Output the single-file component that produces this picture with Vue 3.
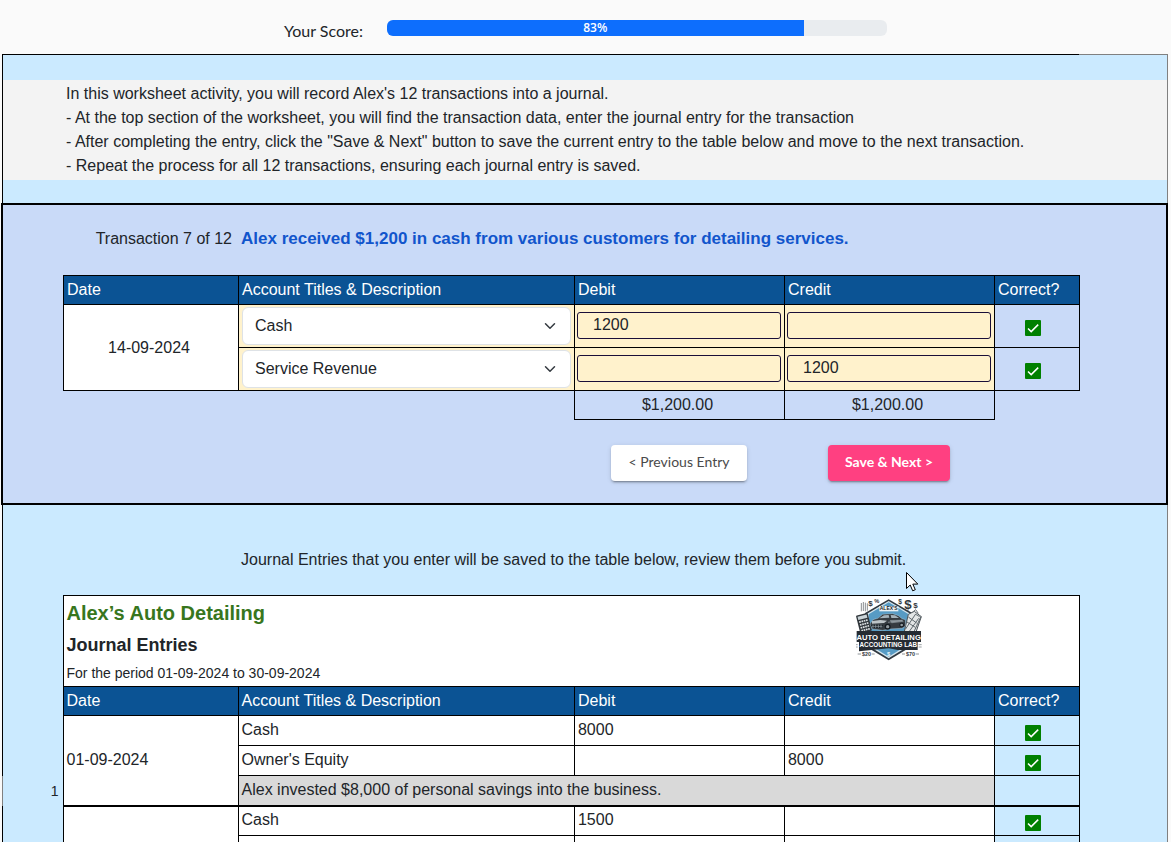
<script setup>
import { ref } from 'vue'

const score = (10 / 12) * 100
const scoreText = Math.floor(score)
const accounts = ['Cash', 'Service Revenue', "Owner's Equity", 'Supplies', 'Accounts Payable']
const lines = ref([
  { account: 'Cash', debit: '1200', credit: '' },
  { account: 'Service Revenue', debit: '', credit: '1200' },
])
const journal = [
  {
    no: 1,
    date: '01-09-2024',
    rows: [
      { account: 'Cash', debit: '8000', credit: '' },
      { account: "Owner's Equity", debit: '', credit: '8000' },
    ],
    note: 'Alex invested $8,000 of personal savings into the business.',
  },
  {
    no: 2,
    date: '',
    rows: [
      { account: 'Cash', debit: '1500', credit: '' },
      { account: '', debit: '', credit: '' },
    ],
    note: '',
  },
]
</script>

<template>
  <div class="page">
    <header class="score">
      <span id="score-label" class="score-label">Your Score:</span>
      <div class="track" role="progressbar" aria-labelledby="score-label" :aria-valuenow="scoreText" aria-valuemin="0" aria-valuemax="100">
        <div class="fill" :style="{ width: score + '%' }">{{ scoreText }}%</div>
      </div>
    </header>

    <main class="sheet">
      <section class="intro">
        <div class="intro-text">
          <p>In this worksheet activity, you will record Alex's 12 transactions into a journal.</p>
          <p>- At the top section of the worksheet, you will find the transaction data, enter the journal entry for the transaction</p>
          <p>- After completing the entry, click the "Save &amp; Next" button to save the current entry to the table below and move to the next transaction.</p>
          <p>- Repeat the process for all 12 transactions, ensuring each journal entry is saved.</p>
        </div>
      </section>

      <section class="panel">
        <div class="prompt">
          <span class="counter">Transaction 7 of 12</span>
          <strong class="event">Alex received $1,200 in cash from various customers for detailing services.</strong>
        </div>
        <table class="grid entry">
          <colgroup>
            <col class="c-date" /><col /><col class="c-amount" /><col class="c-amount" /><col class="c-ok" />
          </colgroup>
          <thead>
            <tr>
              <th scope="col">Date</th>
              <th scope="col">Account Titles &amp; Description</th>
              <th scope="col">Debit</th>
              <th scope="col">Credit</th>
              <th scope="col">Correct?</th>
            </tr>
          </thead>
          <tbody>
            <tr v-for="(line, i) in lines" :key="i" class="line">
              <td v-if="i === 0" rowspan="2" class="white center">14-09-2024</td>
              <td class="cream pick-cell">
                <div class="pick">
                  <select v-model="line.account" :aria-label="'Account, line ' + (i + 1)">
                    <option v-for="a in accounts" :key="a">{{ a }}</option>
                  </select>
                  <svg class="chevron" viewBox="0 0 16 16" aria-hidden="true"><path d="m2 5 6 6 6-6" /></svg>
                </div>
              </td>
              <td class="cream amount-cell"><input v-model="line.debit" type="text" :aria-label="'Debit, line ' + (i + 1)" /></td>
              <td class="cream amount-cell"><input v-model="line.credit" type="text" :aria-label="'Credit, line ' + (i + 1)" /></td>
              <td class="ok">
                <svg class="tick" viewBox="0 0 16 16" role="img" aria-label="Correct"><rect width="16" height="16" rx="1" /><path d="M3 8.5 6.2 11.6 13.2 4.6" /></svg>
              </td>
            </tr>
            <tr class="totals">
              <td colspan="2" class="blank"></td>
              <td class="center">$1,200.00</td>
              <td class="center">$1,200.00</td>
              <td class="blank"></td>
            </tr>
          </tbody>
        </table>
        <div class="actions">
          <div class="slot"><button type="button" class="btn">&lt; Previous Entry</button></div>
          <div class="slot"><button type="button" class="btn primary">Save &amp; Next &gt;</button></div>
        </div>
      </section>

      <p class="hint">Journal Entries that you enter will be saved to the table below, review them before you submit.</p>

      <table class="grid journal">
        <colgroup>
          <col class="c-no" /><col class="c-date" /><col /><col class="c-amount" /><col class="c-amount" /><col class="c-ok" />
        </colgroup>
        <thead>
          <tr class="title-row">
            <td class="gutter"></td>
            <td colspan="5" class="white title-cell">
              <div class="title-box">
                <div>
                  <h1>Alex’s Auto Detailing</h1>
                  <h2>Journal Entries</h2>
                  <p class="period">For the period 01-09-2024 to 30-09-2024</p>
                </div>
                <svg class="logo" viewBox="33 102 198 189" role="img" aria-label="Alex's Auto Detailing Accounting Lab">
                  <!-- badge -->
                  <path d="M131 106 202 147 202 246 131 289 60 246 60 147Z" fill="#303941" />
                  <path d="M131 111 196 149 196 243 131 283 66 243 66 149Z" fill="#d5e6ef" />
                  <path d="M131 115 191 151 191 241 131 278 71 241 71 151Z" fill="#579bc4" />
                  <!-- money marks -->
                  <g fill="#30373c" font-family="Liberation Sans, sans-serif" font-weight="700">
                    <text x="70" y="127" font-size="24">$</text>
                    <text x="88" y="118" font-size="17">%</text>
                    <text x="160" y="119" font-size="20">$</text>
                    <text x="178" y="134" font-size="40">$</text>
                    <text x="205" y="132" font-size="24">$</text>
                  </g>
                  <path d="M49 117v25M55 114v27M61 116v26M67 118v22" stroke="#8b8f91" stroke-width="3" />
                  <!-- calculator -->
                  <g transform="rotate(-14 56 174)">
                    <rect x="38" y="150" width="36" height="55" rx="3" fill="#30363b" />
                    <rect x="42" y="154" width="28" height="10" fill="#c9d3d7" />
                    <path d="M43 171h27M43 180h27M43 189h27M43 198h27" stroke="#dfe3e4" stroke-width="5" stroke-dasharray="5 2" />
                  </g>
                  <!-- ledger and pens -->
                  <path d="M190 151 208 142 229 158 213 204 178 202Z" fill="#e3e6e6" stroke="#4c5459" stroke-width="3" />
                  <path d="M181 196 212 150M193 202 221 163M207 203 228 157M190 159 215 177M186 174 211 190" stroke="#5f686d" stroke-width="3" />
                  <path d="M202 145 212 137 220 148M212 151 224 158" fill="none" stroke="#697277" stroke-width="3" />
                  <!-- name ribbon -->
                  <rect x="103" y="126" width="57" height="16" fill="#edf3f5" />
                  <text x="131" y="139" text-anchor="middle" font-family="Liberation Sans, sans-serif" font-size="15" font-weight="700" fill="#20272c">ALEX'S</text>
                  <!-- car -->
                  <path d="M75 180 84 167 99 163 113 151 143 149 160 155 171 164 181 167 182 186 171 193 132 195 113 199 82 195Z" fill="#353b40" stroke="#dbe6ec" stroke-width="1" />
                  <path d="M103 163 117 154 131 153 133 161ZM137 153 150 154 162 162 139 162Z" fill="#a5b3bb" />
                  <path d="M81 171 106 168 126 170 117 177 81 179Z" fill="#bdc4c7" />
                  <path d="M134 168 172 167 176 173 140 178Z" fill="#7b858b" />
                  <path d="M78 183H114L111 191H82Z" fill="#111a20" />
                  <path d="M80 187H112M129 175 172 169M84 182v10M92 182v10M100 182v10M108 182v10" stroke="#9fa8ad" stroke-width="2" />
                  <circle cx="128" cy="188" r="9" fill="#151b20" /><circle cx="128" cy="188" r="5" fill="#929a9e" />
                  <circle cx="170" cy="183" r="7" fill="#151b20" /><circle cx="170" cy="183" r="4" fill="#929a9e" />
                  <!-- title banners -->
                  <path d="M35 201H228V234H218V258H159L131 253 102 256 42 262V234H35Z" fill="#252b32" />
                  <g fill="#fff" text-anchor="middle" font-weight="700" font-family="Liberation Sans Narrow, Liberation Sans, sans-serif">
                    <text x="131" y="227" font-size="23">AUTO DETAILING</text>
                    <text x="130" y="250" font-size="19">ACCOUNTING LAB</text>
                  </g>
                  <path d="M38 242h-5M38 249h-5M221 242h9M221 249h9" stroke="#666f74" stroke-width="2" />
                  <text x="131" y="275" text-anchor="middle" font-family="Liberation Sans, sans-serif" font-size="17" font-weight="700" fill="#eef6fa">$</text>
                  <path d="M38 270h10M80 270h9M171 270h9M212 270h10" stroke="#545d63" stroke-width="2" />
                  <g fill="#333b40" font-family="Liberation Sans, sans-serif" font-size="16" font-weight="700">
                    <text x="51" y="276">$20</text>
                    <text x="183" y="276">$70</text>
                  </g>
                </svg>
              </div>
            </td>
          </tr>
          <tr>
            <td class="gutter"></td>
            <th scope="col">Date</th>
            <th scope="col">Account Titles &amp; Description</th>
            <th scope="col">Debit</th>
            <th scope="col">Credit</th>
            <th scope="col">Correct?</th>
          </tr>
        </thead>
        <tbody v-for="entry in journal" :key="entry.no">
          <tr v-for="(row, i) in entry.rows" :key="i" class="saved">
            <td class="gutter"></td>
            <td v-if="i === 0" :rowspan="entry.rows.length + (entry.note ? 1 : 0)" class="white">{{ entry.date }}</td>
            <td class="white value">{{ row.account }}</td>
            <td class="white value">{{ row.debit }}</td>
            <td class="white value">{{ row.credit }}</td>
            <td class="ok">
              <svg class="tick" viewBox="0 0 16 16" role="img" aria-label="Correct"><rect width="16" height="16" rx="1" /><path d="M3 8.5 6.2 11.6 13.2 4.6" /></svg>
            </td>
          </tr>
          <tr v-if="entry.note" class="saved">
            <td class="gutter number">{{ entry.no }}</td>
            <td colspan="3" class="note">{{ entry.note }}</td>
            <td></td>
          </tr>
        </tbody>
      </table>
    </main>

    <svg class="pointer" viewBox="0 0 13 20" aria-hidden="true">
      <path d="M.5.5v16l3.7-3.5 2.5 5.8 2.6-1.1-2.5-5.6h5Z" />
    </svg>
  </div>
</template>

<style>
html,
body {
  background: #fafafa;
}
</style>

<style scoped>
.page {
  height: 100vh;
  overflow: hidden;
  background: #fafafa;
  color: #212529;
  font: 16px/24px "Liberation Sans", Arial, sans-serif;
}
.page * {
  box-sizing: border-box;
}
p,
h1,
h2 {
  margin: 0;
}
.score {
  display: flex;
  justify-content: center;
  gap: 24px;
  height: 54px;
  padding-top: 20px;
  font-family: Lato, sans-serif;
  line-height: 22px;
}
.track {
  width: 500px;
  height: 16px;
  border-radius: 6px;
  background: #e9ecef;
  overflow: hidden;
}
.fill {
  height: 16px;
  background: #0d6efd;
  color: #fff;
  font: 600 12px/16px "Open Sans", sans-serif;
  text-align: center;
}
.sheet {
  margin: 0 3px 0 2px;
  border-left: 1px solid #000;
  border-right: 1px solid #808080;
  background: #cbeaff;
}
.intro {
  padding: 26px 0 23px;
  background: linear-gradient(to right, #000 calc(100% - 88px), #808080 0) top / 100% 1px no-repeat;
}
.intro-text {
  padding: 2px 63px;
  background: #f3f3f3;
}
.panel {
  margin: 0 -1px 0 -2px;
  padding: 22px 86px 22px 60px;
  border: 2px solid #000;
  background: #c9daf8;
}
.prompt {
  display: flex;
  align-items: baseline;
  gap: 9px;
  margin-bottom: 24px;
}
.counter {
  width: 169px;
  text-align: right;
}
.event {
  color: #1155cc;
  font-size: 17px;
}
.grid {
  width: 100%;
  table-layout: fixed;
  border-collapse: collapse;
}
.c-no {
  width: 60px;
}
.c-date {
  width: 175px;
}
.c-amount {
  width: 210px;
}
.c-ok {
  width: 85px;
}
.grid tr {
  height: 29px;
}
.grid th,
.grid td {
  padding: 0 3px;
  border: 1px solid #000;
  text-align: left;
  font-weight: 400;
}
.grid th {
  background: #0b5394;
  color: #fff;
}
.grid .line {
  height: 43px;
}
.grid .white {
  background: #fff;
}
.grid .cream {
  background: #fff2cc;
}
.grid .center {
  padding: 0 7px 0 3px;
  text-align: center;
}
.grid .blank {
  border: 0;
}
.pick {
  display: grid;
  align-items: center;
}
.pick > * {
  grid-area: 1 / 1;
}
.pick select {
  width: 100%;
  height: 38px;
  padding: 0 12px;
  border: 1px solid #dee2e6;
  border-radius: 6px;
  background: #fff;
  color: inherit;
  font: inherit;
  appearance: none;
}
.chevron {
  width: 12px;
  height: 12px;
  margin-right: 15px;
  justify-self: end;
  fill: none;
  stroke: #343a40;
  stroke-width: 2;
  stroke-linecap: round;
  stroke-linejoin: round;
  pointer-events: none;
}
.grid .amount-cell {
  padding: 0 3px 2px 2px;
}
.amount-cell input {
  display: block;
  width: 100%;
  height: 27px;
  padding: 0 15px;
  border: 1px solid #1a0f38;
  border-radius: 3px;
  background: transparent;
  color: inherit;
  font: inherit;
}
.grid .ok {
  padding: 5px 10px 0 3px;
  text-align: center;
}
.entry .line .ok {
  padding: 3px 12px 0 3px;
}
.tick {
  display: block;
  width: 16px;
  height: 16px;
  margin: 0 auto;
}
.tick rect {
  fill: #008000;
}
.tick path {
  fill: none;
  stroke: #fff;
  stroke-width: 1.5;
}
.actions {
  display: flex;
  justify-content: flex-end;
  margin-top: 25px;
  padding-right: 86px;
}
.slot {
  width: 210px;
  text-align: center;
}
.btn {
  height: 36px;
  padding: 0 18px 2px;
  border: 0;
  border-radius: 4px;
  background: #fff;
  color: #4a4a4a;
  font: 400 14px/34px Lato, sans-serif;
  box-shadow: 0 3px 1px -2px rgba(0, 0, 0, 0.2), 0 2px 2px rgba(0, 0, 0, 0.14), 0 1px 5px rgba(0, 0, 0, 0.12);
}
.primary {
  padding: 0 17px 2px;
  background: #ff4081;
  color: #fff;
  font-weight: 700;
}
.hint {
  padding: 43px 88px 23px 238px;
}
.journal {
  width: calc(100% - 87px);
}
.grid .gutter {
  border-width: 0 1px 0 0;
}
.grid .number {
  padding: 0 4px 0 0;
  font-size: 14px;
  text-align: right;
  box-shadow: -1px 0 #808080;
}
.grid .title-row {
  height: 91px;
}
.title-box {
  display: flex;
  justify-content: space-between;
}
h1 {
  color: #38761d;
  font-size: 20px;
  line-height: 34px;
}
h2 {
  font-size: 18px;
  line-height: 30px;
}
.period {
  font-size: 14px;
  line-height: 26px;
}
.logo {
  width: 66px;
  height: 63px;
  margin: 2px 154px 0 0;
}
.grid .saved {
  height: 30px;
}
.grid .value {
  padding-bottom: 2px;
}
.grid .note {
  background: #d9d9d9;
}
.grid tbody + tbody tr:first-child td:not(.gutter) {
  border-top-width: 2px;
}
.pointer {
  position: absolute;
  left: 906px;
  top: 572px;
  width: 13px;
  height: 20px;
  fill: #fff;
  stroke: #000;
}
</style>
